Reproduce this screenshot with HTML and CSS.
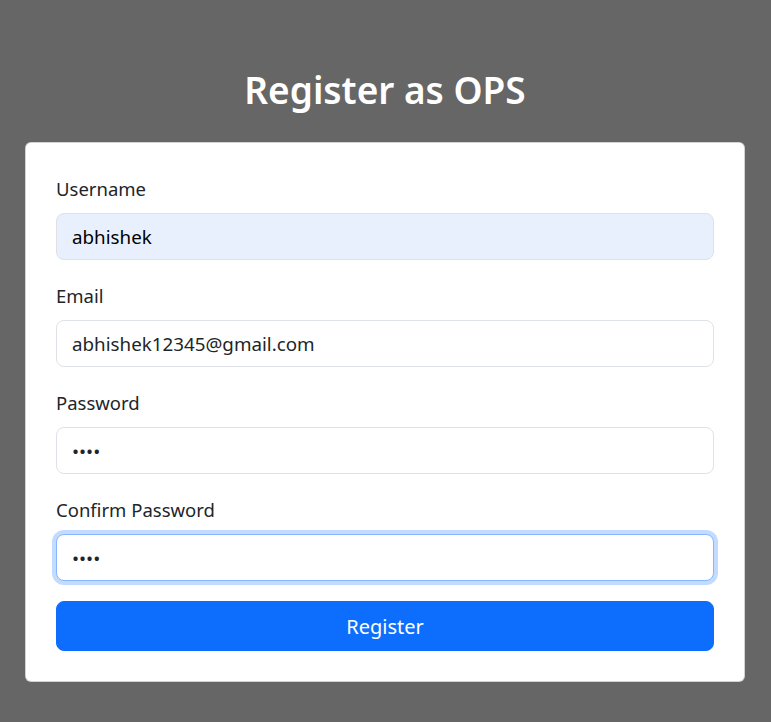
FILE: index.html
```html
<!DOCTYPE html>
<html lang="en">
<head>
<meta charset="utf-8">
<title>Register as OPS</title>
<link rel="stylesheet" href="styles.css">
</head>
<body>
<main class="page">
  <h1 class="title">Register as OPS</h1>
  <form class="card">
    <div class="field">
      <label class="label" for="username">Username</label>
      <input class="input autofill" id="username" type="text" value="abhishek">
    </div>
    <div class="field">
      <label class="label" for="email">Email</label>
      <input class="input" id="email" type="email" value="abhishek12345@gmail.com">
    </div>
    <div class="field">
      <label class="label" for="password">Password</label>
      <input class="input" id="password" type="password" value="1234">
    </div>
    <div class="field">
      <label class="label" for="confirm">Confirm Password</label>
      <input class="input focused" id="confirm" type="password" value="1234">
    </div>
    <button class="btn" type="button">Register</button>
  </form>
</main>
</body>
</html>
```
FILE: styles.css
```css
* { box-sizing: border-box; }
html, body { margin: 0; padding: 0; }
body {
  background: #666666;
  font-family: "Noto Sans", "Open Sans", sans-serif;
  color: #212529;
  min-height: 722px;
}
.page {
  display: flex;
  flex-direction: column;
  align-items: center;
  padding: 66px 1px 0 0;
}
.title {
  margin: 0 0 28px;
  color: #ffffff;
  font-size: 37px;
  font-weight: 600;
  line-height: 48px;
}
.card {
  width: 720px;
  background: #ffffff;
  border: 1px solid rgba(0, 0, 0, 0.175);
  border-radius: 6px;
  padding: 30px;
  display: flex;
  flex-direction: column;
}
.field {
  display: flex;
  flex-direction: column;
  margin-bottom: 20px;
}
.label {
  font-size: 18.5px;
  line-height: 30px;
  padding-top: 1px;
  margin-bottom: 9px;
}
.input {
  height: 47px;
  padding: 0 15px;
  font-family: inherit;
  font-size: 18.8px;
  color: #212529;
  background: #ffffff;
  border: 1px solid #dee2e6;
  border-radius: 8px;
  outline: none;
}
.input.autofill { background: #e8f0fe; color: #000; }
.input.focused {
  border-color: #86b7fe;
  box-shadow: 0 0 0 4px rgba(13, 110, 253, 0.25);
}
.btn {
  height: 50px;
  padding: 0;
  font-family: inherit;
  font-size: 20px;
  color: #ffffff;
  background: #0d6efd;
  border: 1px solid #0d6efd;
  border-radius: 8px;
  cursor: pointer;
}
```
